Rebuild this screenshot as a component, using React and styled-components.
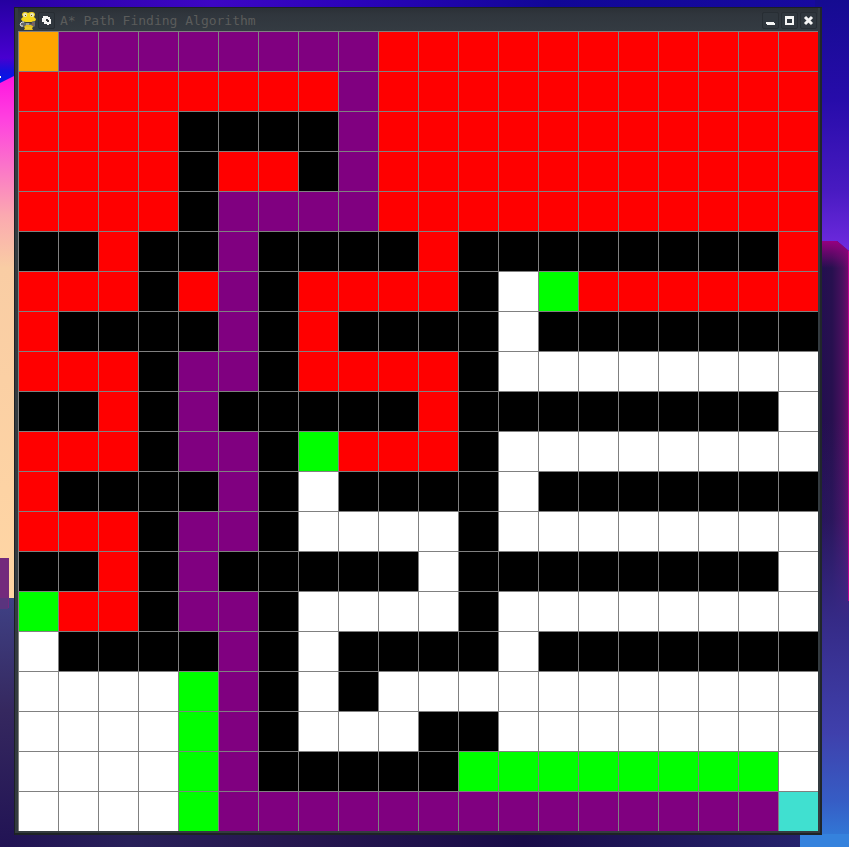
import React from 'react';
import styled, { createGlobalStyle } from 'styled-components';

const GlobalStyle = createGlobalStyle`
  * { box-sizing: border-box; }
  body { margin: 0; background: #241755; }
`;

const Desktop = styled.main`
  position: relative;
  isolation: isolate;
  overflow: hidden;
  min-height: 100vh;
  padding: 7px 27px 12px 14px;
`;

const WallpaperArt = styled.svg`
  position: absolute;
  inset: 0;
  width: 100%;
  height: 100%;
  z-index: -1;
`;

const Window = styled.section`
  border: 1px solid #1b2025;
  border-right: 2px solid #20262a;
  border-bottom: 2px solid #1d2225;
  background: #343b40;
  padding: 0 2px 2px 3px;
`;

const TitleBar = styled.header`
  display: flex;
  align-items: center;
  height: 23px;
  padding: 2px 1px 0 1px;
  background: linear-gradient(#2b3036, #30363d 30%, #343b42);
`;

const Title = styled.h1`
  flex: 1;
  margin: 0 0 0 5px;
  font: 400 13px/18px "DejaVu Sans Mono", monospace;
  color: #5b5c5b;
  white-space: nowrap;
`;

const Controls = styled.div`
  display: flex;
  gap: 2px;
`;

const TitleButton = styled.button`
  display: grid;
  place-items: center;
  width: 17px;
  height: 17px;
  padding: 0;
  border: 1px solid #272d33;
  border-radius: 2px;
  background: #30373e;
  color: #f5f5f5;
`;

const Glyph = styled.svg`
  display: block;
  width: 15px;
  height: 15px;
`;

const Mascot = styled.svg`
  display: block;
  width: 18px;
  height: 20px;
  margin-right: 1px;
`;

const Board = styled.div`
  display: grid;
  grid-template-columns: repeat(20, 1fr);
`;

const cellColors = {
  O: '#ffa500',
  P: '#800080',
  R: '#ff0000',
  K: '#000000',
  W: '#ffffff',
  G: '#00ff00',
  T: '#40e0d0',
};

const Cell = styled.div`
  aspect-ratio: 1;
  border-top: 1px solid #808080;
  border-left: 1px solid #808080;
  background: ${({ $kind }) => cellColors[$kind]};
`;

const rows = [
  'OPPPPPPPPRRRRRRRRRRR',
  'RRRRRRRRPRRRRRRRRRRR',
  'RRRRKKKKPRRRRRRRRRRR',
  'RRRRKRRKPRRRRRRRRRRR',
  'RRRRKPPPPRRRRRRRRRRR',
  'KKRKKPKKKKRKKKKKKKKR',
  'RRRKRPKRRRRKWGRRRRRR',
  'RKKKKPKRKKKKWKKKKKKK',
  'RRRKPPKRRRRKWWWWWWWW',
  'KKRKPKKKKKRKKKKKKKKW',
  'RRRKPPKGRRRKWWWWWWWW',
  'RKKKKPKWKKKKWKKKKKKK',
  'RRRKPPKWWWWKWWWWWWWW',
  'KKRKPKKKKKWKKKKKKKKW',
  'GRRKPPKWWWWKWWWWWWWW',
  'WKKKKPKWKKKKWKKKKKKK',
  'WWWWGPKWKWWWWWWWWWWW',
  'WWWWGPKWWWKKWWWWWWWW',
  'WWWWGPKKKKKGGGGGGGGW',
  'WWWWGPPPPPPPPPPPPPPT',
];

function Wallpaper() {
  return (
    <WallpaperArt viewBox="0 0 849 847" preserveAspectRatio="none" aria-hidden="true">
      <defs>
        <linearGradient id="sky">
          <stop offset="0" stopColor="#2900a4" />
          <stop offset="0.25" stopColor="#3d06c4" />
          <stop offset="0.42" stopColor="#2b03ba" />
          <stop offset="0.65" stopColor="#110797" />
          <stop offset="1" stopColor="#180aa0" />
        </linearGradient>
        <linearGradient id="leftSky" x1="0" y1="0" x2="0" y2="1">
          <stop offset="0" stopColor="#2500a0" />
          <stop offset="0.7" stopColor="#4800d0" />
          <stop offset="0.85" stopColor="#1610dc" />
          <stop offset="1" stopColor="#001bec" />
        </linearGradient>
        <linearGradient id="sunset" x1="0" y1="0" x2="0" y2="1">
          <stop offset="0" stopColor="#ff12e0" />
          <stop offset="0.09" stopColor="#ff42df" />
          <stop offset="0.17" stopColor="#fb70cb" />
          <stop offset="0.27" stopColor="#fba9b0" />
          <stop offset="0.37" stopColor="#f9cda4" />
          <stop offset="1" stopColor="#ffd6a4" />
        </linearGradient>
        <linearGradient id="leftDusk" x1="0" y1="0" x2="0" y2="1">
          <stop offset="0" stopColor="#3f4185" />
          <stop offset="0.45" stopColor="#35285f" />
          <stop offset="1" stopColor="#211354" />
        </linearGradient>
        <linearGradient id="rightSky" x1="0" y1="0" x2="0" y2="1">
          <stop offset="0" stopColor="#150b91" />
          <stop offset="0.4" stopColor="#270caa" />
          <stop offset="0.75" stopColor="#481ac1" />
          <stop offset="1" stopColor="#702be0" />
        </linearGradient>
        <linearGradient id="tower">
          <stop offset="0" stopColor="#200e50" />
          <stop offset="0.5" stopColor="#27104f" />
          <stop offset="0.8" stopColor="#48105e" />
          <stop offset="1" stopColor="#74096d" />
        </linearGradient>
        <linearGradient id="towerTop" x1="0" y1="0" x2="0" y2="1">
          <stop offset="0" stopColor="#960080" />
          <stop offset="1" stopColor="#960080" stopOpacity="0" />
        </linearGradient>
        <linearGradient id="towerFade" x1="0" y1="0" x2="0" y2="1">
          <stop offset="0" stopColor="#352a86" stopOpacity="0" />
          <stop offset="0.5" stopColor="#352a86" stopOpacity="0.25" />
          <stop offset="1" stopColor="#352a86" />
        </linearGradient>
        <linearGradient id="rightDusk" x1="0" y1="0" x2="0" y2="1">
          <stop offset="0" stopColor="#352a86" />
          <stop offset="0.5" stopColor="#3f40ac" />
          <stop offset="0.8" stopColor="#365dc5" />
          <stop offset="1" stopColor="#3080dc" />
        </linearGradient>
        <linearGradient id="floor">
          <stop offset="0" stopColor="#211354" />
          <stop offset="0.15" stopColor="#282059" />
          <stop offset="0.35" stopColor="#26174f" />
          <stop offset="0.65" stopColor="#190c48" />
          <stop offset="1" stopColor="#25226c" />
        </linearGradient>
      </defs>
      <rect width="849" height="20" fill="url(#sky)" />
      <rect y="0" width="20" height="83" fill="url(#leftSky)" />
      <path d="M0 83 20 73V600H0Z" fill="url(#sunset)" />
      <rect y="76" width="1" height="2" fill="#fff" />
      <rect y="598" width="20" height="249" fill="url(#leftDusk)" />
      <rect y="558" width="9" height="50" fill="#732a7c" />
      <rect y="598" width="8" height="11" fill="#5a347e" />
      <rect x="815" width="34" height="252" fill="url(#rightSky)" />
      <path d="M815 241H837L849 251V620H815Z" fill="url(#tower)" />
      <path d="M815 241H837L849 251V268H815Z" fill="url(#towerTop)" />
      <rect x="815" y="420" width="34" height="200" fill="url(#towerFade)" />
      <rect x="815" y="619" width="34" height="228" fill="url(#rightDusk)" />
      <rect x="848" y="251" width="1" height="350" fill="#bb078e" />
      <rect x="10" y="830" width="790" height="17" fill="url(#floor)" />
      <rect x="800" y="834" width="49" height="13" fill="#3582dd" />
    </WallpaperArt>
  );
}

function SnakeIcon() {
  return (
    <Mascot viewBox="0 0 18 20" aria-hidden="true">
      <path d="M5 12H14Q16 15 13 17L14 19H5L6 17Q3 15 5 12Z" fill="#e3bf1d" />
      <path d="M3 4Q3 1 6 1Q8 1 9 2Q10 1 13 1Q16 1 16 4L15 6L17 8Q17 11 12 11H7Q3 11 2 8L4 6Z" fill="#f4d51c" />
      <circle cx="6" cy="4" r="2" fill="#e9e5c4" />
      <circle cx="13" cy="4" r="2" fill="#e9e5c4" />
      <rect x="6" y="4" width="1" height="1" fill="#65520f" />
      <rect x="12" y="4" width="1" height="1" fill="#65520f" />
      <path d="M2 11H5L7 12H12L14 10L16 11V15L15 16L12 14H7L5 16H2L1 14V12Z" fill="#65686b" />
      <path d="M5 11H3L1 13L2 15H4" stroke="#e4e4e4" fill="none" />
      <path d="M7 13h3" stroke="#d2d2d2" />
      <path d="M11 12h2" stroke="#39353a" />
      <path d="M13 13h2" stroke="#a4544d" />
      <path d="M6 17h7" stroke="#f3d23b" />
    </Mascot>
  );
}

export default function App() {
  return (
    <>
      <GlobalStyle />
      <Desktop>
        <Wallpaper />
        <Window aria-labelledby="window-title">
          <TitleBar>
            <SnakeIcon />
            <TitleButton type="button" aria-label="Show on all desktops">
              <Glyph viewBox="0 0 15 15">
                <path d="M4 3H9V4H11V6H12V11H10V12H8V11H5V9H3V5H4Z" fill="currentColor" />
                <path d="M7 6H9V7H10V9H8V8H7Z" fill="#30373e" />
              </Glyph>
            </TitleButton>
            <Title id="window-title">A* Path Finding Algorithm</Title>
            <Controls>
              <TitleButton type="button" aria-label="Minimize">
                <Glyph viewBox="0 0 15 15">
                  <path d="M3 9h8v1h1v2H4V11H3Z" fill="currentColor" />
                </Glyph>
              </TitleButton>
              <TitleButton type="button" aria-label="Maximize">
                <Glyph viewBox="0 0 15 15">
                  <path d="M3 3h9v9H3ZM5 6v4h5V6Z" fill="currentColor" fillRule="evenodd" />
                </Glyph>
              </TitleButton>
              <TitleButton type="button" aria-label="Close">
                <Glyph viewBox="0 0 15 15">
                  <path d="M4 4l7 7M11 4l-7 7" stroke="currentColor" strokeWidth="3" />
                </Glyph>
              </TitleButton>
            </Controls>
          </TitleBar>
          <Board role="img" aria-label="Grid with the shortest path from start to end">
            {rows.flatMap((row, y) =>
              [...row].map((kind, x) => <Cell key={`${x}-${y}`} $kind={kind} />)
            )}
          </Board>
        </Window>
      </Desktop>
    </>
  );
}
